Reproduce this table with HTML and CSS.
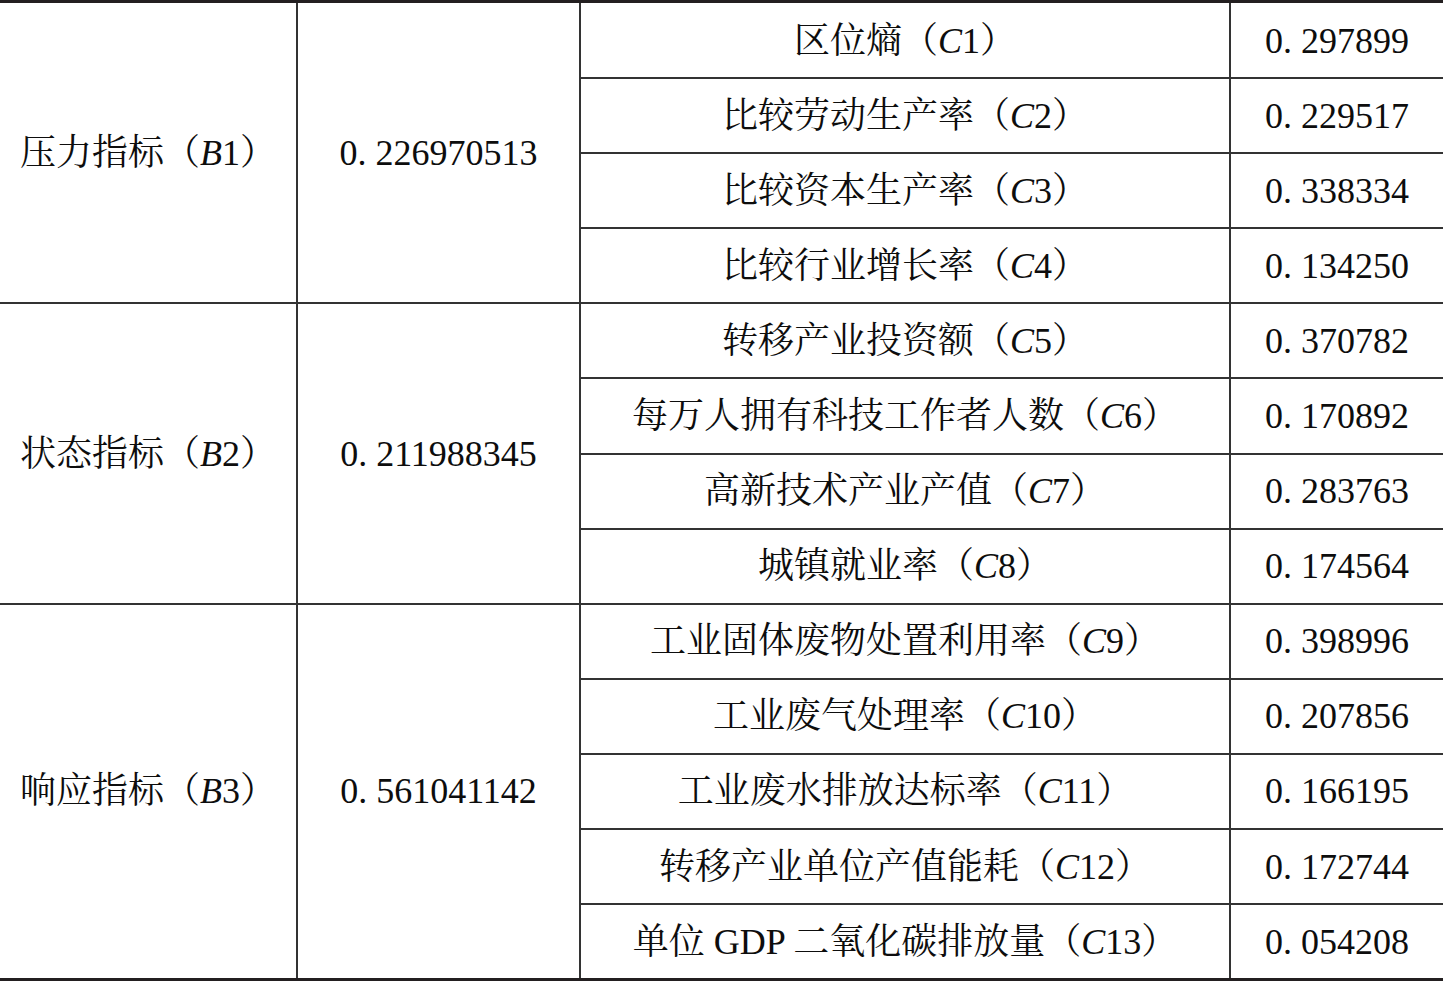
FILE: index.html
```html
<!DOCTYPE html>
<html lang="zh-CN">
<head>
<meta charset="utf-8">
<title>指标权重</title>
<link rel="stylesheet" href="styles.css">
</head>
<body>
<table class="weights">
  <colgroup>
    <col class="c-b">
    <col class="c-bw">
    <col class="c-c">
    <col class="c-cw">
  </colgroup>
  <tbody>
    <tr>
      <td rowspan="4">压力指标（<i>B</i>1）</td>
      <td rowspan="4">0. 226970513</td>
      <td>区位熵（<i>C</i>1）</td>
      <td>0. 297899</td>
    </tr>
    <tr><td>比较劳动生产率（<i>C</i>2）</td><td>0. 229517</td></tr>
    <tr><td>比较资本生产率（<i>C</i>3）</td><td>0. 338334</td></tr>
    <tr><td>比较行业增长率（<i>C</i>4）</td><td>0. 134250</td></tr>
    <tr>
      <td rowspan="4">状态指标（<i>B</i>2）</td>
      <td rowspan="4">0. 211988345</td>
      <td>转移产业投资额（<i>C</i>5）</td>
      <td>0. 370782</td>
    </tr>
    <tr><td>每万人拥有科技工作者人数（<i>C</i>6）</td><td>0. 170892</td></tr>
    <tr><td>高新技术产业产值（<i>C</i>7）</td><td>0. 283763</td></tr>
    <tr><td>城镇就业率（<i>C</i>8）</td><td>0. 174564</td></tr>
    <tr>
      <td rowspan="5">响应指标（<i>B</i>3）</td>
      <td rowspan="5">0. 561041142</td>
      <td>工业固体废物处置利用率（<i>C</i>9）</td>
      <td>0. 398996</td>
    </tr>
    <tr><td>工业废气处理率（<i>C</i>10）</td><td>0. 207856</td></tr>
    <tr><td>工业废水排放达标率（<i>C</i>11）</td><td>0. 166195</td></tr>
    <tr><td>转移产业单位产值能耗（<i>C</i>12）</td><td>0. 172744</td></tr>
    <tr><td>单位 GDP 二氧化碳排放量（<i>C</i>13）</td><td>0. 054208</td></tr>
  </tbody>
</table>
</body>
</html>
```

FILE: styles.css
```css
html, body {
  margin: 0;
  padding: 0;
  background: #ffffff;
}

.weights {
  width: 1443px;
  border-collapse: collapse;
  table-layout: fixed;
  border-top: 3px solid #231f20;
  border-bottom: 3px solid #231f20;
  font-family: "Liberation Serif", "Noto Serif CJK SC", "Noto Sans CJK SC", serif;
  font-size: 36px;
  color: #0d0d0d;
}

.c-b { width: 297px; }
.c-bw { width: 283px; }
.c-c { width: 650px; }
.c-cw { width: 213px; }

.weights td {
  height: 73.1px;
  padding: 0;
  text-align: center;
  vertical-align: middle;
  white-space: nowrap;
  border: 2px solid #333333;
  line-height: 1;
}

.weights tr:first-child td {
  padding-top: 1px;
}

.weights tr td:first-child[rowspan] {
  border-left: none;
}

.weights tr td:last-child {
  border-right: none;
}

.weights i {
  font-style: italic;
}
```
